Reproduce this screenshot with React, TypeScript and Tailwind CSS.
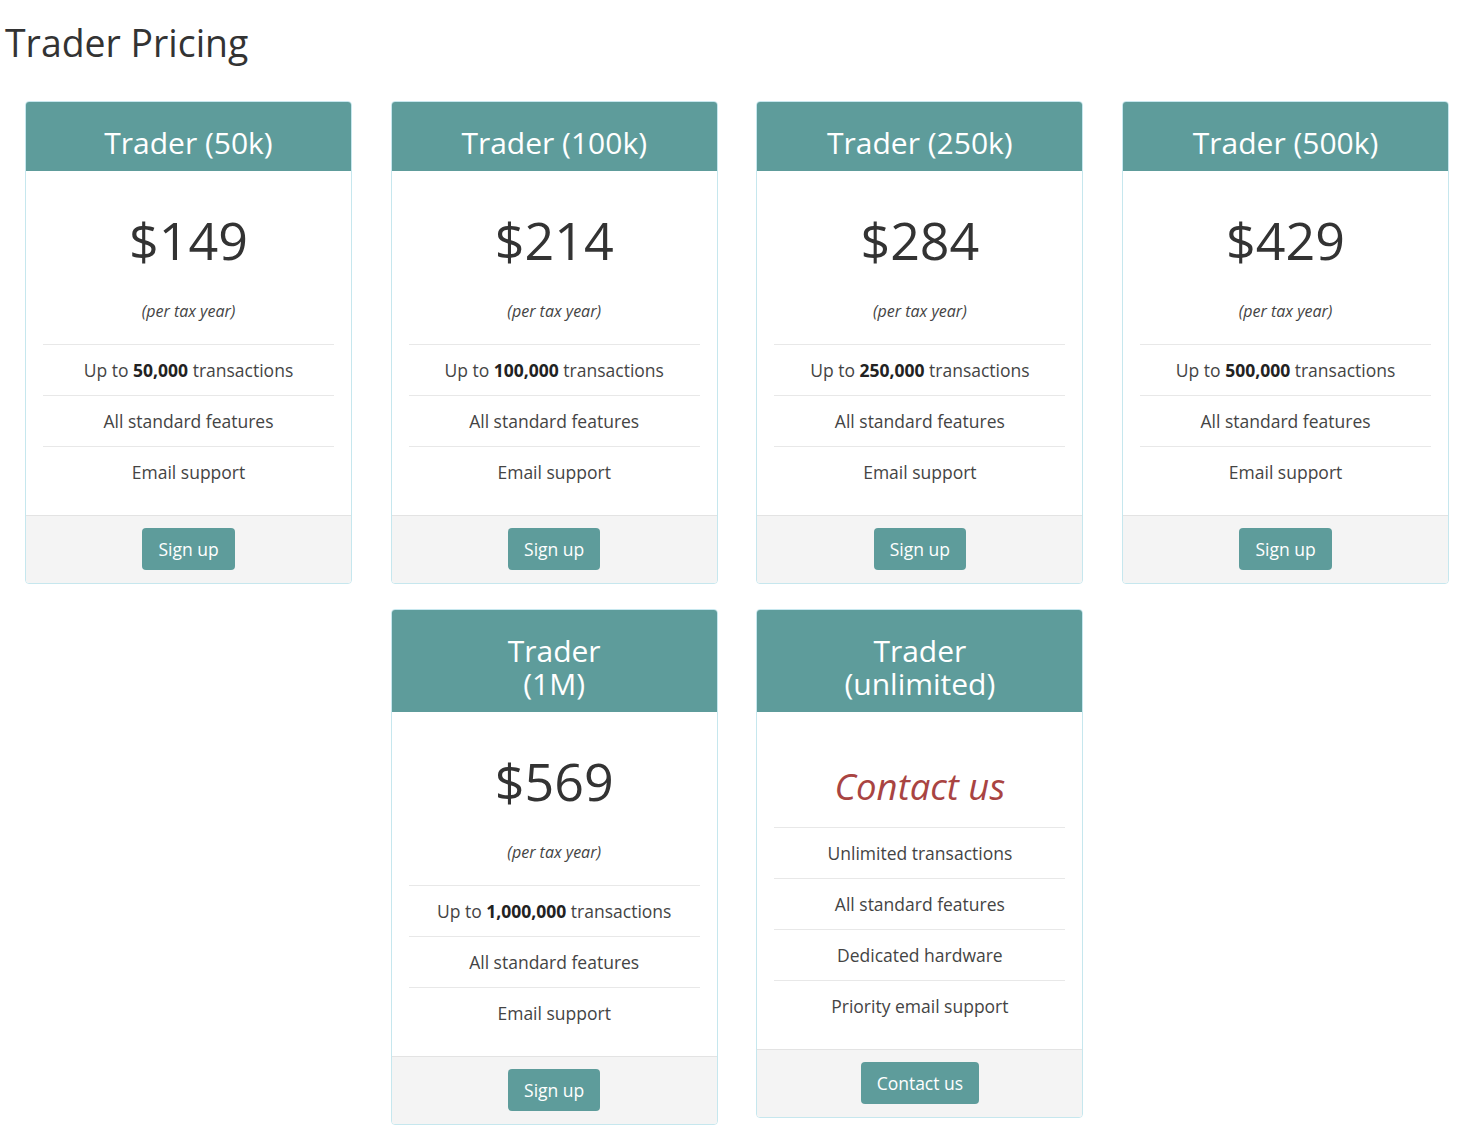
import React from "react";

type Plan = {
  title: React.ReactNode;
  price?: string;
  features: React.ReactNode[];
  button: string;
  col: string;
};

const std = (n: string) => [
  <span key="a">
    Up to <b className="font-bold text-[#222]">{n}</b> transactions
  </span>,
  "All standard features",
  "Email support",
];

const plans: Plan[] = [
  { title: "Trader (50k)", price: "$149", features: std("50,000"), button: "Sign up", col: "" },
  { title: "Trader (100k)", price: "$214", features: std("100,000"), button: "Sign up", col: "" },
  { title: "Trader (250k)", price: "$284", features: std("250,000"), button: "Sign up", col: "" },
  { title: "Trader (500k)", price: "$429", features: std("500,000"), button: "Sign up", col: "" },
  {
    title: (
      <>
        <div>Trader</div>
        <div>(1M)</div>
      </>
    ),
    price: "$569",
    features: std("1,000,000"),
    button: "Sign up",
    col: "col-start-2",
  },
  {
    title: (
      <>
        <div>Trader</div>
        <div>(unlimited)</div>
      </>
    ),
    features: ["Unlimited transactions", "All standard features", "Dedicated hardware", "Priority email support"],
    button: "Contact us",
    col: "col-start-3",
  },
];

function Card({ p }: { p: Plan }) {
  return (
    <div className={`${p.col} w-[327px] border border-[#c6e7ee] rounded-[4px] overflow-hidden bg-white`}>
      <div className="bg-[#5e9c9b] text-white text-center text-[30px] leading-[33px] pt-[24px] pb-[12px]">
        {p.title}
      </div>
      <div className="px-[17px] pt-[34px] pb-[18px] text-center">
        {p.price ? (
          <>
            <div className="text-[52px] leading-[70px] text-[#333]">{p.price}</div>
            <div className="mt-[25px] mb-[22px] text-[16px] leading-[22px] italic text-[#444]">(per tax year)</div>
          </>
        ) : (
          <div className="text-[36.5px] leading-[81px] italic text-[#a94442]">Contact us</div>
        )}
        {p.features.map((f, i) => (
          <div key={i} className="border-t border-[#e8e8e8] leading-[50px] text-[17.5px] text-[#444]">
            {f}
          </div>
        ))}
      </div>
      <div className="bg-[#f4f4f4] border-t border-[#e3e3e3] pt-[12px] pb-[13px] flex justify-center">
        <button className="bg-[#5e9c9b] text-white text-[17.5px] leading-[42px] px-[16px] rounded-[4px]">
          {p.button}
        </button>
      </div>
    </div>
  );
}

export default function App() {
  return (
    <div className="bg-white min-h-[1144px] w-[1460px]" style={{ fontFamily: '"Open Sans", sans-serif' }}>
      <h1 className="pl-[5px] pt-[15px] text-[37.4px] leading-[56px] text-[#333]">Trader Pricing</h1>
      <div className="pl-[25px] pt-[30px] grid grid-cols-[repeat(4,327px)] gap-x-[38.7px] gap-y-[25px] items-start">
        {plans.map((p, i) => (
          <Card key={i} p={p} />
        ))}
      </div>
    </div>
  );
}
